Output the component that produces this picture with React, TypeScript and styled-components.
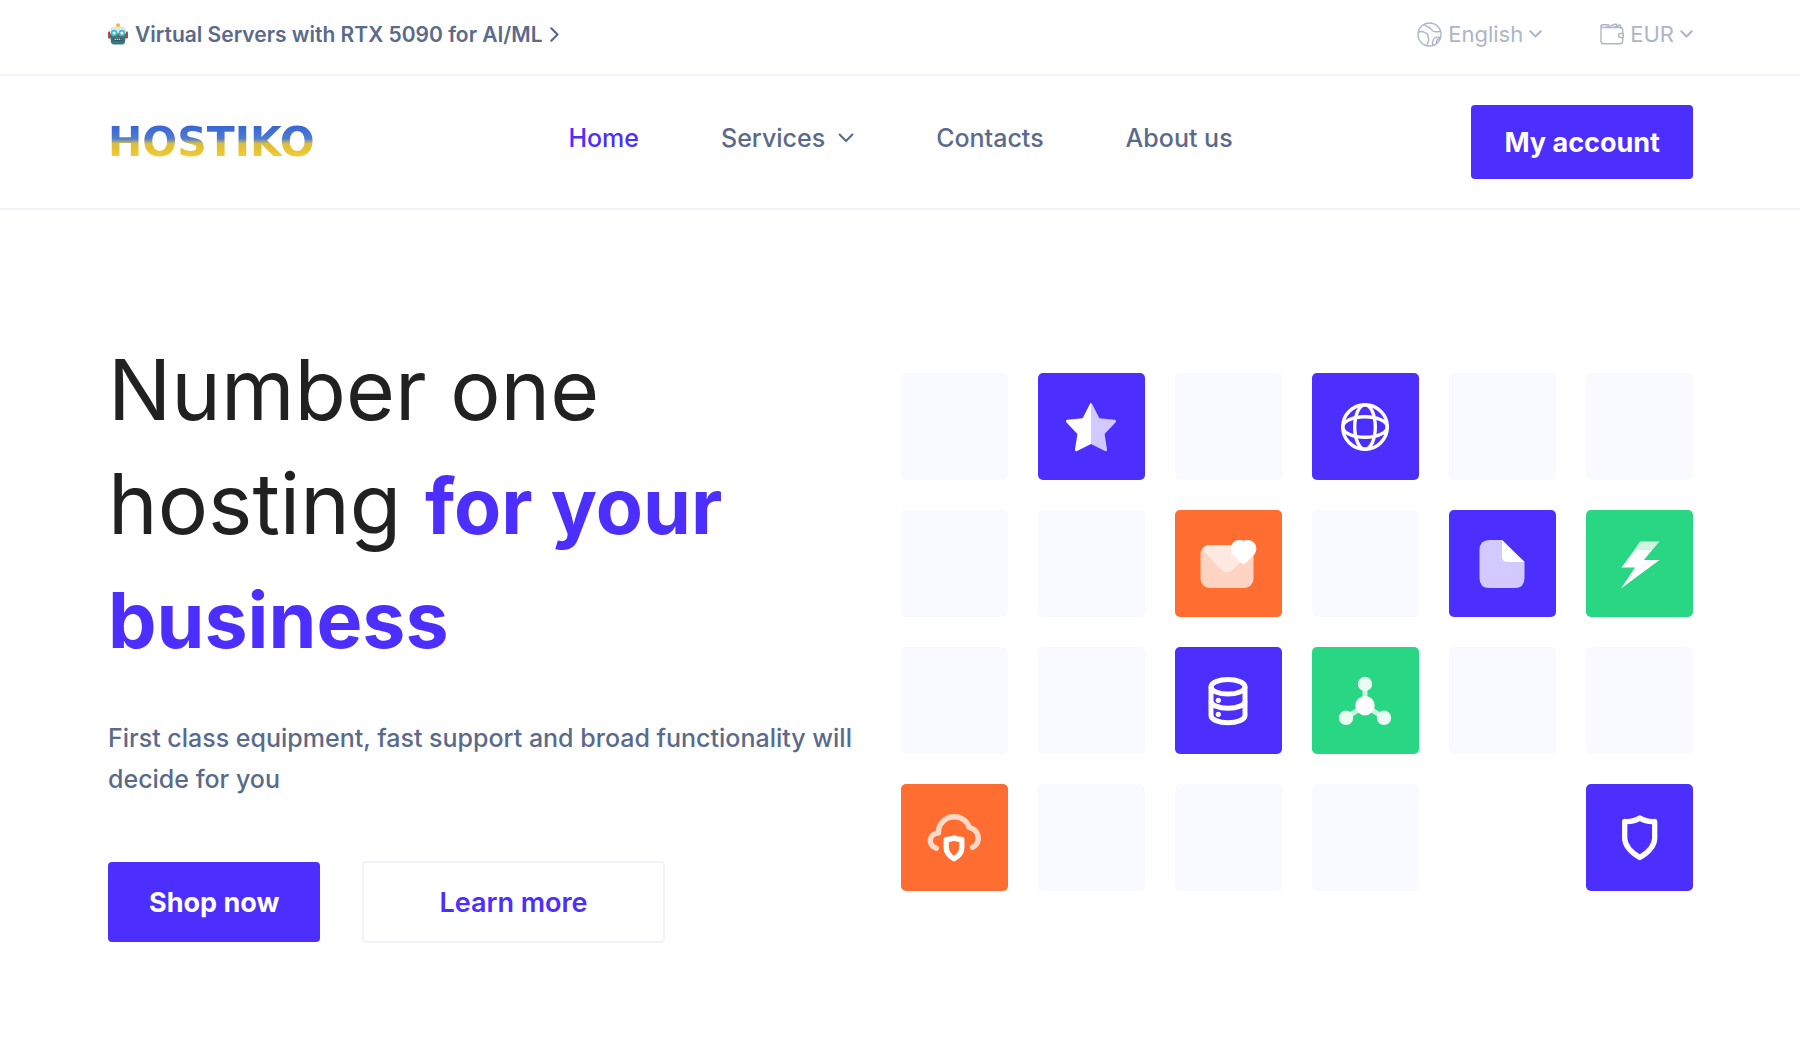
import React from 'react';
import styled, { createGlobalStyle, ThemeProvider } from 'styled-components';

const theme = {
  primary: '#4c2eff',
  orange: '#ff6d30',
  green: '#28d684',
  tile: '#f9faff',
  text: '#5a6a8b',
  muted: '#adb5c7',
  dark: '#212121',
  line: '#f2f2fa',
};

const GlobalStyle = createGlobalStyle`
  *, *::before, *::after { box-sizing: border-box; }
  body {
    margin: 0;
    background: #fff;
    color: ${theme.text};
    font-family: Inter, "Liberation Sans", sans-serif;
    font-size: 22px;
  }
  a { color: inherit; text-decoration: none; }
  button, select { font: inherit; cursor: pointer; }
`;

const Bar = styled.div`
  display: flex;
  align-items: center;
  justify-content: space-between;
  padding: 0 107px 0 6%;
  border-bottom: 2px solid ${p => p.theme.line};
`;

const TopBar = styled(Bar)`
  height: 76px;
  padding-bottom: 6px;
`;

const HeaderBar = styled(Bar).attrs({ as: 'header' })`
  display: grid;
  grid-template-columns: 1fr auto 1fr;
  justify-items: start;
  height: 134px;
`;

const Promo = styled.a`
  display: flex;
  align-items: center;
  gap: 7px;
  font-size: 21px;
  font-weight: 600;
`;

const Options = styled.div`
  display: flex;
  gap: 58px;
`;

const Option = styled.label`
  display: flex;
  align-items: center;
  gap: 6px;
  color: ${p => p.theme.muted};
`;

const OptionSelect = styled.select`
  appearance: none;
  field-sizing: content;
  padding: 0;
  border: 0;
  background: none;
  color: inherit;
`;

const Logo = styled.a`
  font-family: "DejaVu Sans", sans-serif;
  font-size: 41px;
  font-weight: 700;
  line-height: 40px;
  background: linear-gradient(to bottom, #3a66d6 12%, #4f7ccf 42%, #d8bf45 54%, #e6c02f 66%, #f2d03c 90%);
  background-clip: text;
  -webkit-background-clip: text;
  color: transparent;
`;

const Nav = styled.nav`
  display: flex;
  align-items: center;
  gap: 82px;
  padding-bottom: 8px;
  font-size: 25px;
  font-weight: 500;
`;

const NavLink = styled.a<{ $active?: boolean }>`
  color: ${p => (p.$active ? p.theme.primary : p.theme.text)};
`;

const NavButton = styled.button`
  display: flex;
  align-items: center;
  gap: 13px;
  padding: 0;
  border: 0;
  background: none;
  color: inherit;
`;

const Button = styled.button<{ $outline?: boolean; $compact?: boolean }>`
  height: ${p => (p.$compact ? 74 : p.$outline ? 82 : 80)}px;
  padding: 0 ${p => (p.$outline ? 75 : p.$compact ? 33 : 41)}px;
  border: ${p => (p.$outline ? `2px solid ${p.theme.line}` : '0')};
  border-radius: 4px;
  background: ${p => (p.$outline ? '#fff' : p.theme.primary)};
  color: ${p => (p.$outline ? p.theme.primary : '#fff')};
  font-size: 27px;
  font-weight: ${p => (p.$outline ? 600 : 700)};
  white-space: nowrap;
`;

const AccountButton = styled(Button).attrs({ $compact: true })`
  justify-self: end;
`;

const Hero = styled.main`
  display: grid;
  grid-template-columns: 1fr 1fr;
  align-items: start;
  padding: 123px 107px 123px 6%;
`;

const Copy = styled.section`
  padding-right: 24px;
`;

const Title = styled.h1`
  max-width: 720px;
  margin: 0 0 43px;
  color: ${p => p.theme.dark};
  font-size: 84px;
  font-weight: 400;
  line-height: 114px;

  strong {
    color: ${p => p.theme.primary};
    font-size: 77px;
    font-weight: 700;
    line-height: 1;
  }
`;

const Lead = styled.p`
  margin: 0 0 61px;
  font-size: 25px;
  font-weight: 500;
  line-height: 41px;
`;

const Actions = styled.div`
  display: flex;
  align-items: center;
  gap: 42px;
`;

const Tiles = styled.section`
  display: grid;
  grid-template-columns: repeat(6, 1fr);
  gap: 30px;
  padding-top: 40px;
`;

const Tile = styled.div<{ $color: string }>`
  display: flex;
  align-items: center;
  justify-content: center;
  aspect-ratio: 1;
  border-radius: 5px;
  background: ${p => p.$color};
`;

const Glyph = ({ children }: { children: React.ReactNode }) => (
  <svg width="64" height="64" viewBox="0 0 64 64" fill="none" aria-hidden="true">
    {children}
  </svg>
);

const Chevron = ({ w, stroke }: { w: number; stroke: number }) => (
  <svg width={w} height={w * 0.6} viewBox="0 0 15 9" fill="none" aria-hidden="true">
    <path d="M1.5 1.5 7.5 7.5 13.5 1.5" stroke="currentColor" strokeWidth={stroke} strokeLinecap="round" strokeLinejoin="round" />
  </svg>
);

const Robot = () => (
  <svg width="20" height="22" viewBox="0 0 20 22" aria-hidden="true">
    <path d="M9 2h2v4H9z" fill="#c98b4a" />
    <circle cx="10" cy="2.2" r="2" fill="#f8b532" />
    <rect x="0" y="8.5" width="3" height="7" rx="1" fill="#b5473f" />
    <rect x="17" y="8.5" width="3" height="7" rx="1" fill="#b5473f" />
    <path d="M5 4h10q3 0 3 4v3H2V8q0-4 3-4z" fill="#dfe7e6" />
    <path d="M2 10.500h16l-.8 7.500q-.4 3.500-3.200 3.500H6q-2.800 0-3.200-3.500z" fill="#38777d" />
    <circle cx="6.100" cy="10" r="3.200" fill="#35bcd0" />
    <circle cx="13.900" cy="10" r="3.200" fill="#35bcd0" />
    <circle cx="6.100" cy="10" r="1.600" fill="#d9fbff" />
    <circle cx="13.900" cy="10" r="1.600" fill="#d9fbff" />
    <path d="m10 10 1.800 3H8.200z" fill="#d9473e" />
    <path d="M5.500 15h9v2.500h-9z" fill="#23434c" />
    <path d="M6.500 16.200h7" stroke="#d8d2c8" strokeWidth="1.400" strokeDasharray="1.400 .7" />
  </svg>
);

const Earth = () => (
  <svg width="25" height="25" viewBox="0 0 25 25" fill="none" stroke="currentColor" strokeWidth="1.4" strokeLinejoin="round" aria-hidden="true">
    <circle cx="12.500" cy="12.500" r="11.500" />
    <path d="M1.200 10.500Q5 8.500 7.500 10.500C9 11.500 11.500 11 11 14C10.700 16 12.500 17 11.500 19Q9.800 21 10.500 23.700" />
    <path d="M7.500 2.200C8.500 5.500 11.500 4 13.500 6.500C15.500 10 18.500 10.500 23.300 9.200" />
    <path d="M23.300 15.500Q17.500 14 16 18.500Q14.500 21 16.500 23.300" />
    <path d="M19.500 21.500Q18.500 17.500 23 16.500" />
  </svg>
);

const Wallet = () => (
  <svg width="24" height="22" viewBox="0 0 24 22" fill="none" stroke="currentColor" strokeWidth="1.400" strokeLinejoin="round" aria-hidden="true">
    <path d="M22.700 10V7Q22.700 4.500 20 4.500H3Q1 4.500 1 2.800V18Q1 20.800 3.500 20.800H20Q22.700 20.800 22.700 18V15" />
    <path d="M1 3Q1 1.800 3 1.800H9M6 4.300 16 1 18.500 4.300M14 4.300 20 1.800 21.300 4.700" />
    <path d="M23.200 10.500H20.500Q18.500 10.500 18.500 12.500T20.500 14.500H23.200Z" />
  </svg>
);

const Star = () => (
  <Glyph>
    <path d="M32 8Q31.300 8 30.800 9.200L23.600 23.200 8.500 24.800Q6.200 25.300 7.300 27.300L18.400 39 16 54.500Q15.800 56.800 18 56L32 49Z" fill="#fff" />
    <path d="M32 8Q32.700 8 33.200 9.200L40.400 23.200 55.500 24.800Q57.800 25.300 56.700 27.300L45.600 39 48 54.500Q48.200 56.800 46 56L32 49Z" fill="#d2caff" />
  </Glyph>
);

const Globe = () => (
  <Glyph>
    <g stroke="#fff" strokeWidth="3.4">
      <circle cx="32" cy="32" r="22.300" />
      <ellipse cx="32" cy="32" rx="10.300" ry="22.300" />
      <ellipse cx="32" cy="32" rx="22.300" ry="10.300" />
    </g>
  </Glyph>
);

const Mail = () => (
  <Glyph>
    <rect x="4.500" y="13" width="53" height="43" rx="9" fill="#ffd3c1" />
    <path d="M6 17.500Q8.500 13 13.500 13H48L51 24 37 37.500Q31 43.500 25 37.500Z" fill="#ffe9e0" />
    <path d="M47.500 32.500Q46.500 32.300 44.500 30.200L37 23C33 18.500 34.500 12 38.500 9.300C41.500 7.600 45.500 7.800 47.500 9C49.500 7.800 54 7.600 57 9.800C61 13 61.500 19 58 23L50.500 30.200Q48.500 32.300 47.500 32.500Z" fill="#fff" />
  </Glyph>
);

const File = () => (
  <Glyph>
    <path d="M32 8H19.500Q9.500 8 9.500 18V46Q9.500 56 19.500 56H44.500Q54.500 56 54.500 46V30Z" fill="#d2caff" />
    <path d="M32 8 54.500 30H38Q32 30 32 24Z" fill="#fff" />
  </Glyph>
);

const Bolt = () => (
  <Glyph>
    <path d="M27 17.200H44.800L35.800 28H51.500L13 56.500 27 35.500H13.500Z" fill="#fff" />
    <path d="M32 9.500H51.500L44.800 17.200H26.800Z" fill="#d0f6e3" />
  </Glyph>
);

const Database = () => (
  <Glyph>
    <g stroke="#fff" strokeWidth="5">
      <ellipse cx="32" cy="17.800" rx="17" ry="7.300" />
      <path d="M15 17.800V46.500C15 50.500 22.500 53.700 32 53.700S49 50.500 49 46.500V17.800" />
      <path d="M15 32C15 36 22.500 39.300 32 39.300S49 36 49 32" />
    </g>
    <circle cx="22.300" cy="31.300" r="2.600" fill="#fff" />
    <circle cx="22.300" cy="45.300" r="2.600" fill="#fff" />
  </Glyph>
);

const Network = () => (
  <Glyph>
    <path d="M32 15V36.700M32 36.700 13 48.700M32 36.700 51 48.700" stroke="#c9f4df" strokeWidth="5" />
    <g fill="#e9fbf3">
      <circle cx="32" cy="15" r="7.200" />
      <circle cx="13" cy="48.800" r="7.200" />
      <circle cx="51" cy="48.800" r="7.200" />
    </g>
    <circle cx="32" cy="36.700" r="9.700" fill="#fff" />
  </Glyph>
);

const CloudShield = () => (
  <Glyph>
    <path d="M14.300 42.300C5.500 39.500 6.500 27.500 16.500 27C16 18.500 23 10.700 32 10.700C39.500 10.700 45 15 47.300 21.500C57.500 24 59.500 36.500 50.600 41.300" stroke="#ffd8c8" strokeWidth="5.400" strokeLinecap="round" strokeLinejoin="round" />
    <path d="M24.200 33.500Q28.500 33.500 32 32Q35.500 33.500 39.800 33.500V41.500Q39.800 48.500 32 52.800Q24.200 48.500 24.200 41.500Z" stroke="#fff" strokeWidth="5.300" strokeLinejoin="round" />
  </Glyph>
);

const Shield = () => (
  <Glyph>
    <path d="M16.700 15.500Q26 16 31.800 12Q37.600 16 46.700 15.500V32Q46.700 42.500 31.800 51.600Q16.700 42.500 16.700 32Z" stroke="#fff" strokeWidth="5.300" strokeLinejoin="round" />
  </Glyph>
);

const { primary: P, orange: O, green: G, tile: T } = theme;

const tiles: [string, (() => React.JSX.Element)?][] = [
  [T], [P, Star], [T], [P, Globe], [T], [T],
  [T], [T], [O, Mail], [T], [P, File], [G, Bolt],
  [T], [T], [P, Database], [G, Network], [T], [T],
  [O, CloudShield], [T], [T], [T], ['transparent'], [P, Shield],
];

export default function App() {
  return (
    <ThemeProvider theme={theme}>
      <GlobalStyle />
      <TopBar>
        <Promo href="#rtx">
          <Robot />
          Virtual Servers with RTX 5090 for AI/ML
          <svg width="9" height="15" viewBox="0 0 9 15" fill="none" aria-hidden="true">
            <path d="M1.300 1.300 7.500 7.500 1.300 13.700" stroke="currentColor" strokeWidth="2.200" strokeLinecap="round" strokeLinejoin="round" />
          </svg>
        </Promo>
        <Options>
          <Option>
            <Earth />
            <OptionSelect aria-label="Language">
              <option>English</option>
            </OptionSelect>
            <Chevron w={13} stroke={2.4} />
          </Option>
          <Option>
            <Wallet />
            <OptionSelect aria-label="Currency">
              <option>EUR</option>
            </OptionSelect>
            <Chevron w={13} stroke={2.4} />
          </Option>
        </Options>
      </TopBar>
      <HeaderBar>
        <Logo href="#home">HOSTIKO</Logo>
        <Nav>
          <NavLink href="#home" $active>Home</NavLink>
          <NavButton type="button">
            Services
            <Chevron w={16} stroke={2} />
          </NavButton>
          <NavLink href="#contacts">Contacts</NavLink>
          <NavLink href="#about">About us</NavLink>
        </Nav>
        <AccountButton type="button">My account</AccountButton>
      </HeaderBar>
      <Hero>
        <Copy>
          <Title>Number one hosting <strong>for your business</strong></Title>
          <Lead>First class equipment, fast support and broad functionality will decide for you</Lead>
          <Actions>
            <Button type="button">Shop now</Button>
            <Button type="button" $outline>Learn more</Button>
          </Actions>
        </Copy>
        <Tiles aria-label="Features">
          {tiles.map(([color, Icon], i) => (
            <Tile key={i} $color={color}>{Icon && <Icon />}</Tile>
          ))}
        </Tiles>
      </Hero>
    </ThemeProvider>
  );
}
